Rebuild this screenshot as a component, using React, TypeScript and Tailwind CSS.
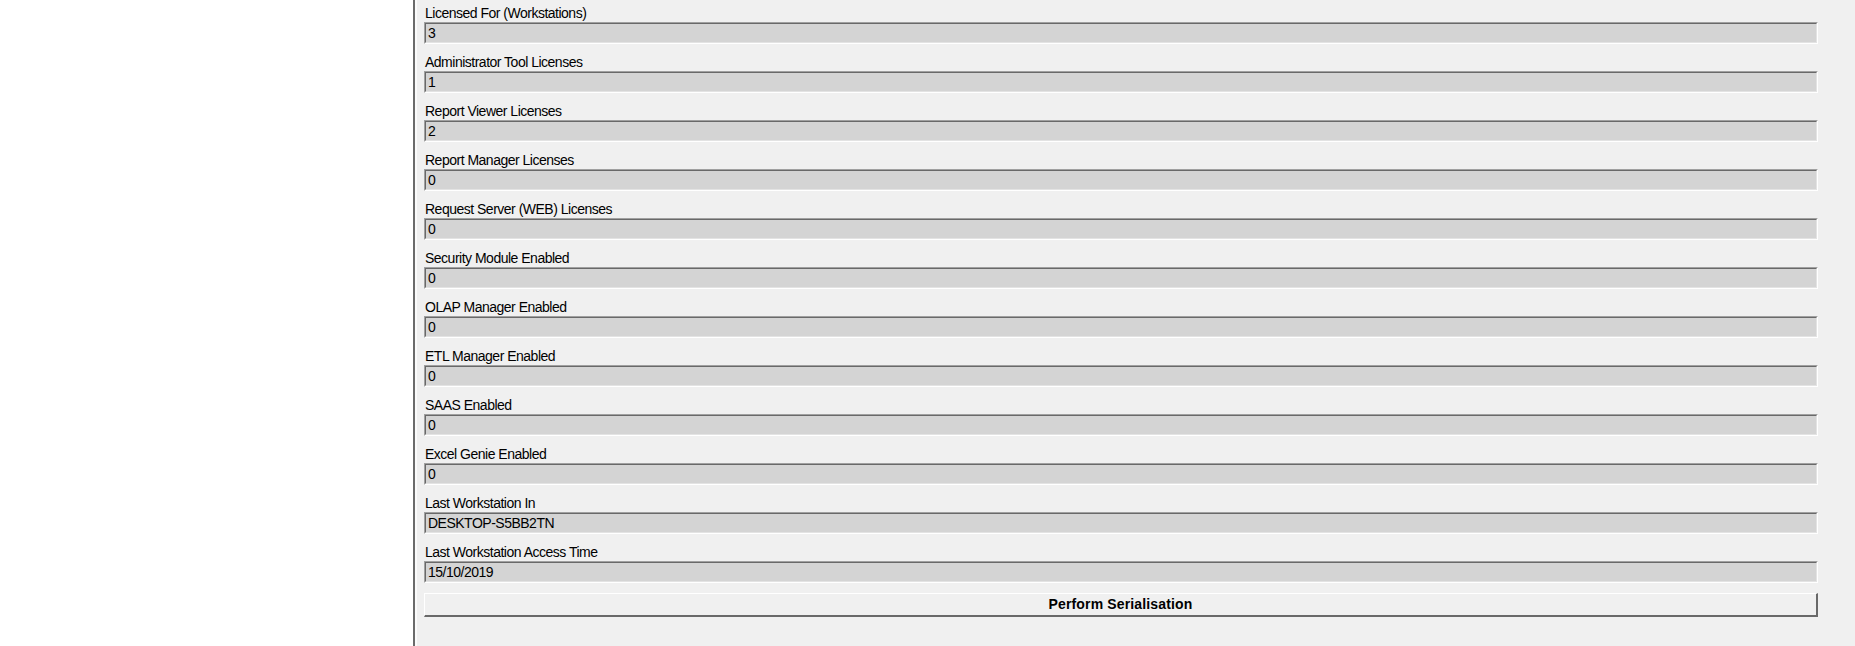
import React from 'react';

const fields: { label: string; value: string }[] = [
  { label: 'Licensed For (Workstations)', value: '3' },
  { label: 'Administrator Tool Licenses', value: '1' },
  { label: 'Report Viewer Licenses', value: '2' },
  { label: 'Report Manager Licenses', value: '0' },
  { label: 'Request Server (WEB) Licenses', value: '0' },
  { label: 'Security Module Enabled', value: '0' },
  { label: 'OLAP Manager Enabled', value: '0' },
  { label: 'ETL Manager Enabled', value: '0' },
  { label: 'SAAS Enabled', value: '0' },
  { label: 'Excel Genie Enabled', value: '0' },
  { label: 'Last Workstation In', value: 'DESKTOP-S5BB2TN' },
  { label: 'Last Workstation Access Time', value: '15/10/2019' },
];

const ReadOnlyField: React.FC<{ value: string }> = ({ value }) => (
  <div className="h-[22px] border-t border-l border-[#a0a0a0] border-b border-r border-b-white border-r-white">
    <div className="h-full border-t border-l border-[#696969] border-b border-r border-b-[#e3e3e3] border-r-[#e3e3e3] bg-[#d4d4d4] pl-[2px] text-[14px] leading-[18px] tracking-[-0.5px] text-black">
      {value}
    </div>
  </div>
);

const App: React.FC = () => {
  return (
    <div
      className="flex h-[646px] w-full overflow-hidden bg-[#f0f0f0]"
      style={{ fontFamily: '"Liberation Sans", Arial, sans-serif' }}
    >
      {/* tree / list pane */}
      <div className="w-[415px] shrink-0 bg-white border-r-2 border-[#6b6b6b]" />

      {/* licence details */}
      <div className="flex-1 border-l-2 border-[#fbfbfb] pl-[7px] pr-[37px] pt-[5px]">
        {fields.map((f) => (
          <div key={f.label} className="mb-[10px]">
            <div className="h-[17px] pl-[1px] text-[14px] leading-[17px] tracking-[-0.5px] text-black whitespace-nowrap">
              {f.label}
            </div>
            <ReadOnlyField value={f.value} />
          </div>
        ))}

        <button
          type="button"
          className="flex h-[24px] w-full items-center justify-center border-t border-l border-white border-b-2 border-r-2 border-b-[#696969] border-r-[#696969] bg-[#f0f0f0] text-[14px] font-bold tracking-[0.15px] text-black"
        >
          Perform Serialisation
        </button>
      </div>
    </div>
  );
};

export default App;
